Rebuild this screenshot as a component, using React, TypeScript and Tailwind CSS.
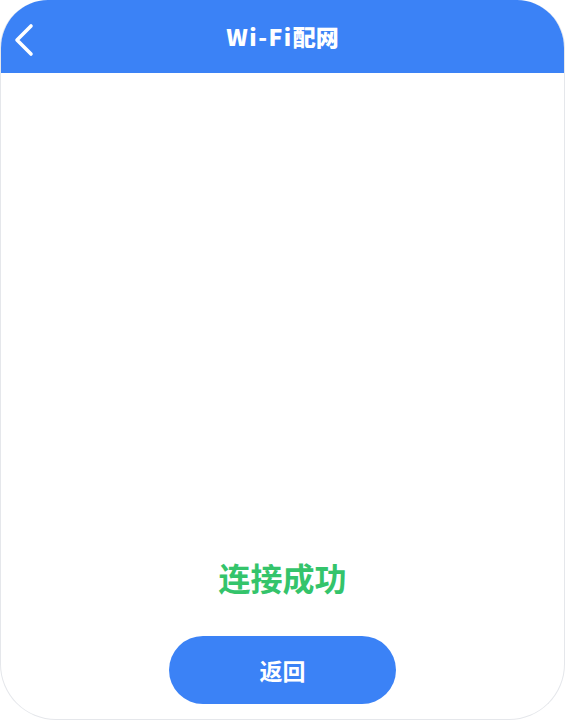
const font = { fontFamily: '"Noto Sans CJK SC", "Noto Sans", sans-serif' }

// back arrow in the header, drawn in page coordinates of the bar
function BackArrow() {
    return (
        <svg width="44" height="73" viewBox="0 0 44 73" fill="none">
            <polyline
                points="30,26 16,40 30,54"
                stroke="white"
                strokeWidth="3.6"
                strokeLinecap="round"
                strokeLinejoin="round"
            />
        </svg>
    )
}

export default function App() {
    return (
        <div className="w-[565px] h-[720px] bg-white" style={font}>
            <div className="flex h-full flex-col overflow-hidden rounded-t-[48px] rounded-b-[56px] border border-gray-200 border-t-0">
                <header className="relative flex h-[73px] shrink-0 items-center justify-center bg-[#3b82f6]">
                    <button className="absolute left-0 top-0">
                        <BackArrow />
                    </button>
                    <h1 className="text-[23px] font-black text-white">
                        <span className="tracking-[1.5px]">Wi-Fi</span>配网
                    </h1>
                </header>
                <main className="flex flex-grow flex-col items-center justify-end pb-[15px]">
                    <p className="text-[32px] leading-[40px] font-semibold text-[#34c46b]">连接成功</p>
                    <button className="mt-[39px] h-[68px] w-[227px] rounded-full bg-[#3b82f6] text-[23px] font-semibold text-white">
                        返回
                    </button>
                </main>
            </div>
        </div>
    )
}
